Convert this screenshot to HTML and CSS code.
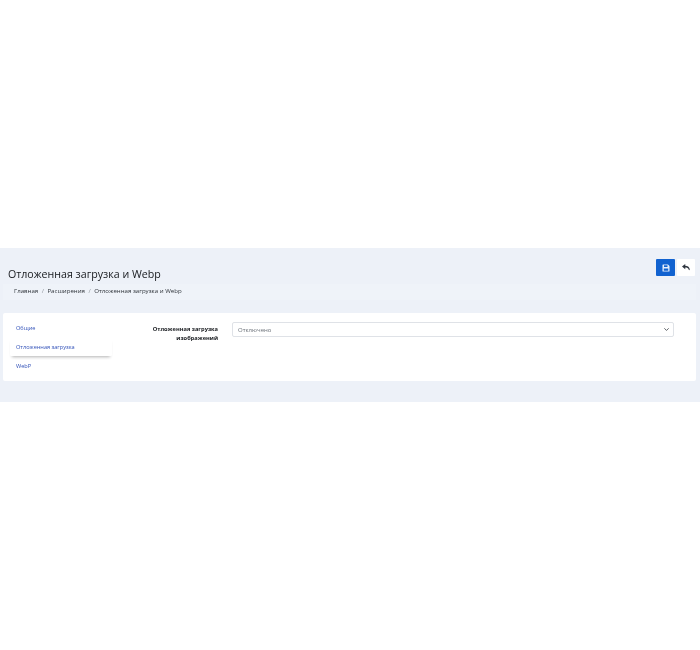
FILE: index.html
```html
<!DOCTYPE html>
<html lang="ru">
<head>
<meta charset="utf-8">
<title>Отложенная загрузка и Webp</title>
<link rel="stylesheet" href="styles.css">
</head>
<body>
<main class="page">
  <header class="head">
    <div class="head-top">
      <h1 class="title">Отложенная загрузка и Webp</h1>
      <div class="actions">
        <button class="btn btn-save" type="button" aria-label="Сохранить">
          <svg width="8" height="8" viewBox="0 0 16 16"><path fill="#e8f0fc" d="M2 1h10l3 3v10a1 1 0 0 1-1 1H2a1 1 0 0 1-1-1V2a1 1 0 0 1 1-1zm2 1.500V6h7V2.500zM3.500 9v4.500h9V9z"/></svg>
        </button>
        <button class="btn btn-back" type="button" aria-label="Назад">
          <svg width="8" height="7" viewBox="0 0 16 14"><path fill="#2f3640" d="M6.500 0 0 5.200l6.500 5.300V7c3.500 0 5.800.8 7 4.500.9 1 1.700 1 2 0C15.500 6 11.500 3.500 6.500 3.300z"/></svg>
        </button>
      </div>
    </div>
    <nav class="crumbs">
      <a>Главная</a><span class="sep">/</span><a>Расширения</a><span class="sep">/</span><a>Отложенная загрузка и Webp</a>
    </nav>
  </header>
  <section class="card">
    <ul class="tabs">
      <li class="tab">Общие</li>
      <li class="tab tab-active">Отложенная загрузка</li>
      <li class="tab">WebP</li>
    </ul>
    <div class="form-row">
      <label class="label">Отложенная загрузка изображений</label>
      <div class="select">
        <span>Отключено</span>
        <svg width="5" height="5" viewBox="0 0 16 16"><path fill="none" stroke="#343a40" stroke-width="2.500" stroke-linecap="round" stroke-linejoin="round" d="m2 5 6 6 6-6"/></svg>
      </div>
    </div>
  </section>
</main>
</body>
</html>
```
FILE: styles.css
```css
* { box-sizing: border-box; }
body {
  margin: 0;
  padding-top: 248px;
  background: #fff;
  font-family: "Open Sans", "Liberation Sans", sans-serif;
  color: #212529;
}
.page {
  height: 154px;
  background: #edf1f8;
  padding: 11px 4px 0 3px;
  filter: blur(0.3px);
}
.head-top {
  display: flex;
  justify-content: space-between;
  align-items: flex-start;
  height: 25px;
}
.title {
  margin: 8px 0 0 5px;
  font-size: 10.650px;
  line-height: 14px;
  font-weight: 400;
  color: #16191d;
}
.actions { display: flex; gap: 2px; margin-right: 1px; }
.btn {
  width: 19px;
  height: 17px;
  padding: 0;
  border: 0;
  border-radius: 1px;
  display: flex;
  align-items: center;
  justify-content: center;
}
.btn-save { background: #1162d0; }
.btn-back { width: 18px; background: #fff; }
.crumbs {
  height: 16px;
  padding: 0 11px 3px;
  display: flex;
  align-items: center;
  font-size: 6.100px;
  color: #2f343a;
  background: #eff3f9;
}
.sep { margin: 0 3.500px; color: #8a8f96; }
.card {
  margin-top: 13px;
  height: 68px;
  background: #fff;
  border-radius: 2px;
  display: flex;
}
.tabs {
  list-style: none;
  margin: 0;
  padding: 5px 0 0 7px;
  width: 109px;
  flex: none;
}
.tab {
  height: 19px;
  padding-left: 6px;
  display: flex;
  align-items: center;
  font-size: 5.600px;
  color: #3050b8;
}
.tab-active {
  box-shadow: 0 3px 3px -2px rgba(0,0,0,.3);
  border-radius: 1px;
}
.form-row {
  display: flex;
  flex: 1;
  padding: 9px 22px 0 0;
  align-items: flex-start;
}
.label {
  width: 106px;
  flex: none;
  text-align: right;
  padding-top: 3px;
  font-size: 5.700px;
  line-height: 9px;
  font-weight: 700;
  color: #16191d;
}
.select {
  flex: 1;
  margin-left: 14px;
  height: 15px;
  border: 1px solid #dfe2e7;
  border-radius: 2px;
  padding: 0 4px 0 5px;
  display: flex;
  align-items: center;
  justify-content: space-between;
  font-size: 6px;
  color: #6c727a;
}
```
